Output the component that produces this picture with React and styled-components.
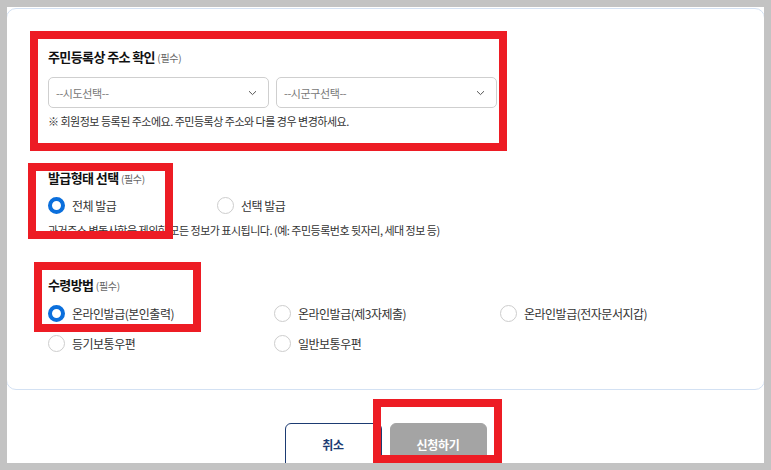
import React, { useState } from "react";
import styled, { createGlobalStyle } from "styled-components";

const GlobalStyle = createGlobalStyle`
  html, body {
    margin: 0;
    padding: 0;
    background: #c3c3c3;
  }
  body {
    font-family: "Noto Sans CJK KR", "Noto Sans", sans-serif;
    color: #222;
  }
  * {
    box-sizing: border-box;
  }
`;

const issueTypes = [
  { id: "all", label: "전체 발급" },
  { id: "part", label: "선택 발급" },
];

const receiveTypes = [
  { id: "self", label: "온라인발급(본인출력)" },
  { id: "third", label: "온라인발급(제3자제출)" },
  { id: "wallet", label: "온라인발급(전자문서지갑)" },
  { id: "reg", label: "등기보통우편" },
  { id: "normal", label: "일반보통우편" },
];

// annotation boxes drawn over the capture
const marks = [
  { left: 23, top: 24, width: 477, height: 120 },
  { left: 21, top: 156, width: 145, height: 76 },
  { left: 27, top: 255, width: 167, height: 70 },
  { left: 366, top: 392, width: 129, height: 64 },
];

function Chevron() {
  return (
    <svg width="9" height="6" viewBox="0 0 9 6">
      <path d="M1 1.2 L4.5 4.6 L8 1.2" fill="none" stroke="#555" strokeWidth="1" />
    </svg>
  );
}

function App() {
  const [issue, setIssue] = useState("all");
  const [receive, setReceive] = useState("self");

  return (
    <>
      <GlobalStyle />
      <Frame>
        <Card>
          <Section>
            <Title>
              주민등록상 주소 확인 <Req>(필수)</Req>
            </Title>
            <SelectRow>
              <SelectBox>
                <Placeholder>--시도선택--</Placeholder>
                <Chevron />
              </SelectBox>
              <SelectBox>
                <Placeholder>--시군구선택--</Placeholder>
                <Chevron />
              </SelectBox>
            </SelectRow>
            <Note>※ 회원정보 등록된 주소에요. 주민등록상 주소와 다를 경우 변경하세요.</Note>
          </Section>

          <Section $gap={40}>
            <Title>
              발급형태 선택 <Req>(필수)</Req>
            </Title>
            <IssueRow>
              {issueTypes.map((t) => (
                <Option key={t.id} onClick={() => setIssue(t.id)}>
                  <Radio $checked={issue === t.id} />
                  <OptionLabel>{t.label}</OptionLabel>
                </Option>
              ))}
            </IssueRow>
            <Note $top={8}>
              과거주소 변동사항을 제외한 모든 정보가 표시됩니다. (예: 주민등록번호 뒷자리, 세대 정보 등)
            </Note>
          </Section>

          <Section $gap={38}>
            <Title>
              수령방법 <Req>(필수)</Req>
            </Title>
            <ReceiveGrid>
              {receiveTypes.map((t) => (
                <Option key={t.id} onClick={() => setReceive(t.id)}>
                  <Radio $checked={receive === t.id} />
                  <OptionLabel>{t.label}</OptionLabel>
                </Option>
              ))}
            </ReceiveGrid>
          </Section>
        </Card>

        <ButtonRow>
          <Button>취소</Button>
          <Button $primary>신청하기</Button>
        </ButtonRow>

        {marks.map((m, i) => (
          <Mark key={i} style={{ left: m.left, top: m.top, width: m.width, height: m.height }} />
        ))}
      </Frame>
    </>
  );
}

const Frame = styled.div`
  position: relative;
  margin: 7px 0 0 7px;
  width: 757px;
  height: 456px;
  background: #fff;
  overflow: hidden;
`;

const Card = styled.div`
  margin: 1px -1px 0 -1px;
  height: 382px;
  padding: 39px 41px 0;
  border: 1px solid #d3e1f3;
  border-radius: 10px;
  background: #fff;
`;

const Section = styled.div`
  margin-top: ${(p) => (p.$gap ? p.$gap : 0)}px;
`;

const Title = styled.h3`
  margin: 0;
  font-size: 13px;
  line-height: 18px;
  font-weight: 700;
  letter-spacing: -0.6px;
  color: #111;
`;

const Req = styled.span`
  font-size: 10px;
  font-weight: 400;
  color: #666;
  letter-spacing: -0.3px;
`;

const SelectRow = styled.div`
  display: grid;
  grid-template-columns: 221px 221px;
  gap: 7px;
  margin-top: 10px;
`;

const SelectBox = styled.div`
  display: flex;
  align-items: center;
  justify-content: space-between;
  height: 31px;
  padding: 0 11px 0 7px;
  border: 1px solid #cfcfcf;
  border-radius: 5px;
  background: #fff;
`;

const Placeholder = styled.span`
  font-size: 11px;
  color: #777;
  letter-spacing: -0.4px;
`;

const Note = styled.p`
  margin: ${(p) => (p.$top ? p.$top : 5)}px 0 0;
  font-size: 11px;
  line-height: 16px;
  letter-spacing: -0.5px;
  color: #333;
`;

const IssueRow = styled.div`
  display: flex;
  margin-top: 8px;
  & > * {
    width: 169px;
  }
`;

const ReceiveGrid = styled.div`
  display: grid;
  grid-template-columns: repeat(3, 226px);
  row-gap: 12px;
  margin-top: 9px;
`;

const Option = styled.label`
  display: flex;
  align-items: center;
  gap: 7px;
  height: 18px;
  cursor: pointer;
`;

const Radio = styled.span`
  flex: none;
  width: 17px;
  height: 17px;
  border-radius: 50%;
  background: #fff;
  border: ${(p) => (p.$checked ? "4.5px solid #0b6fdc" : "1px solid #cdcdcd")};
`;

const OptionLabel = styled.span`
  font-size: 12px;
  letter-spacing: -0.5px;
  color: #333;
`;

const ButtonRow = styled.div`
  display: flex;
  justify-content: center;
  gap: 8px;
  margin-top: 33px;
`;

const Button = styled.button`
  width: 97px;
  height: 48px;
  border-radius: 6px;
  font-family: inherit;
  font-size: 12px;
  font-weight: 700;
  letter-spacing: -0.3px;
  border: 1px solid ${(p) => (p.$primary ? "#a4a4a4" : "#1d3b72")};
  background: ${(p) => (p.$primary ? "#a4a4a4" : "#fff")};
  color: ${(p) => (p.$primary ? "#fff" : "#1d3b72")};
  padding: 0 0 6px;
`;

const Mark = styled.div`
  position: absolute;
  border: 8px solid #ed1c24;
  pointer-events: none;
`;

export default App;
